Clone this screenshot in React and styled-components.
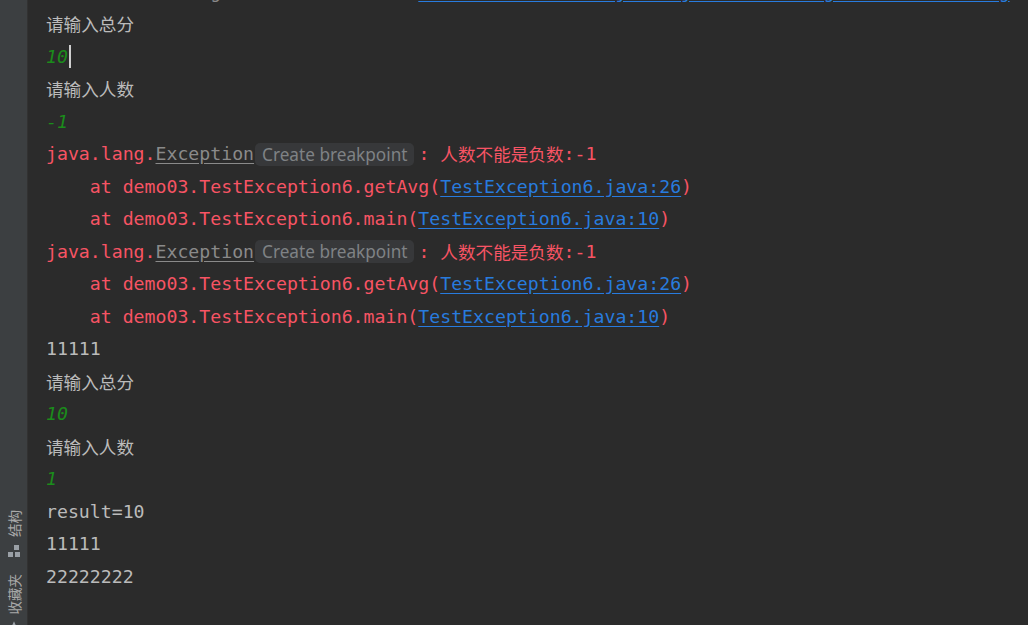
import styled, { createGlobalStyle } from "styled-components";

const GlobalStyle = createGlobalStyle`
  html, body {
    margin: 0;
    padding: 0;
    background: #2b2b2b;
    overflow: hidden;
  }
`;

const Layout = styled.div`
  display: flex;
  width: 100vw;
  height: 100vh;
  background: #2b2b2b;
`;

const Sidebar = styled.div`
  width: 27px;
  flex: none;
  background: #3c3f41;
  border-right: 1px solid #323232;
  display: flex;
  flex-direction: column;
  align-items: center;
  justify-content: flex-end;
  gap: 4px;
  overflow: hidden;
`;

const SideTab = styled.div`
  display: flex;
  flex-direction: column;
  align-items: center;
  gap: 7px;
  margin-bottom: ${(p) => p.$gap || 0}px;
`;

const SideLabel = styled.span`
  writing-mode: vertical-rl;
  text-orientation: sideways;
  transform: rotate(180deg);
  font-family: "Noto Sans CJK SC", "Noto Sans", sans-serif;
  font-size: 13.5px;
  line-height: 14px;
  color: #a9a9a9;
`;

const Console = styled.div`
  flex: 1;
  overflow: hidden;
  padding-left: 18px;
  font-family: "DejaVu Sans Mono", "Noto Sans CJK SC", monospace;
  font-size: 18.2px;
`;

const Lines = styled.div`
  margin-top: -24.5px;
`;

const tones = {
  plain: "#bbbbbb",
  error: "#f75464",
  input: "#1b8c1b",
  muted: "#8a8a8a",
};

const Line = styled.div`
  height: 32.5px;
  line-height: 32.5px;
  white-space: pre;
  color: ${(p) => tones[p.$tone || "plain"]};
  font-style: ${(p) => (p.$tone === "input" ? "italic" : "normal")};
  display: flex;
  align-items: center;
`;

const Prompt = styled.span`
  font-family: "Noto Sans CJK SC", sans-serif;
  font-size: 17.6px;
  color: #bbbbbb;
`;

const Cjk = styled.span`
  font-family: "Noto Sans CJK SC", sans-serif;
  font-size: 17.6px;
`;

const FileLink = styled.span`
  color: #287bde;
  text-decoration: underline;
  text-underline-offset: 3px;
`;

const ClassRef = styled.span`
  color: #8a8a8a;
  text-decoration: underline;
  text-underline-offset: 3px;
`;

const Hint = styled.span`
  display: inline-flex;
  align-items: center;
  height: 23px;
  margin: 0 4px 0 1px;
  padding: 0 7px;
  border-radius: 5px;
  background: #37383a;
  color: #7f8285;
  font-family: "Noto Sans", "Open Sans", sans-serif;
  font-size: 17.2px;
  line-height: 23px;
`;

const Caret = styled.span`
  display: inline-block;
  width: 2px;
  height: 23px;
  background: #cfcfcf;
  margin-left: 1px;
`;

const StructureIcon = () => (
  <svg width="14" height="14" viewBox="0 0 14 14">
    <rect x="7" y="1" width="5" height="5" fill="#9aa0a6" />
    <rect x="1" y="8" width="5" height="5" fill="#9aa0a6" />
    <rect x="8" y="8" width="5" height="5" fill="#9aa0a6" />
  </svg>
);

const StarIcon = () => (
  <svg width="16" height="14" viewBox="0 0 14 12">
    <path d="M7 0 L8.8 4.2 L13.5 4.6 L9.9 7.6 L11 12 L7 9.6 L3 12 L4.1 7.6 L0.5 4.6 L5.2 4.2 Z" fill="#9aa0a6" />
  </svg>
);

const Trace = ({ method, file }) => (
  <Line $tone="error">
    {"    at demo03.TestException6." + method + "("}
    <FileLink>{file}</FileLink>
    {")"}
  </Line>
);

const ExceptionBlock = () => (
  <>
    <Line $tone="error">
      java.lang.<ClassRef>Exception</ClassRef>
      <Hint>Create breakpoint</Hint>
      {": "}
      <Cjk>人数不能是负数</Cjk>
      {":-1"}
    </Line>
    <Trace method="getAvg" file="TestException6.java:26" />
    <Trace method="main" file="TestException6.java:10" />
  </>
);

export default function App() {
  return (
    <Layout>
      <GlobalStyle />
      <Sidebar>
        <SideTab $gap={12}>
          <SideLabel>结构</SideLabel>
          <StructureIcon />
        </SideTab>
        <SideTab $gap={-10}>
          <SideLabel>收藏夹</SideLabel>
          <StarIcon />
        </SideTab>
      </Sidebar>
      <Console>
        <Lines>
          <Line $tone="muted">
            {"A full trace log was written to:  "}
            <FileLink>file:///D:/IdeaProjects/javaSE/out/logs/trace-2023.log</FileLink>
          </Line>
          <Line>
            <Prompt>请输入总分</Prompt>
          </Line>
          <Line $tone="input">
            10
            <Caret />
          </Line>
          <Line>
            <Prompt>请输入人数</Prompt>
          </Line>
          <Line $tone="input">-1</Line>
          <ExceptionBlock />
          <ExceptionBlock />
          <Line>11111</Line>
          <Line>
            <Prompt>请输入总分</Prompt>
          </Line>
          <Line $tone="input">10</Line>
          <Line>
            <Prompt>请输入人数</Prompt>
          </Line>
          <Line $tone="input">1</Line>
          <Line>result=10</Line>
          <Line>11111</Line>
          <Line>22222222</Line>
        </Lines>
      </Console>
    </Layout>
  );
}
